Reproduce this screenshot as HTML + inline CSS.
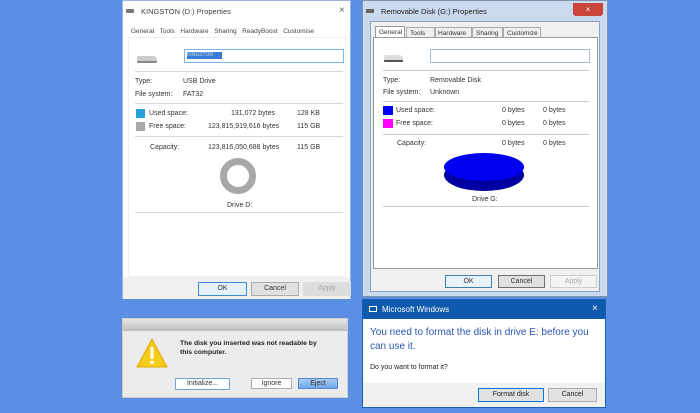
<!DOCTYPE html>
<html><head><meta charset="utf-8"><style>
*{margin:0;padding:0;box-sizing:border-box}
body{width:700px;height:413px;background:#5b8fe3;position:relative;overflow:hidden;font-family:"Liberation Sans",sans-serif;font-size:7px;color:#333}
.a{position:absolute}
.btn{position:absolute;border:1px solid #adadad;background:#e1e1e1;text-align:center;font-size:7px;line-height:12px;color:#333}
.hr{position:absolute;height:1px;background:#d8d8d8}
</style></head><body>

<!-- Window 1 -->
<div class="a" style="left:122px;top:0;width:229px;height:299px;background:#fff;border:1px solid #9bb6de">
  <div class="a" style="left:3px;top:8px;width:8px;height:4px;background:#777;border-radius:1px"></div>
  <div class="a" style="left:18px;top:6px;font-size:7.5px;color:#444">KINGSTON (D:) Properties</div>
  <div class="a" style="left:216px;top:4px;font-size:10px;color:#666">×</div>
  <div class="a" style="left:8px;top:27px;font-size:6.5px;color:#444;white-space:nowrap;word-spacing:1px">General&nbsp; Tools&nbsp; Hardware&nbsp; Sharing&nbsp; ReadyBoost&nbsp; Customise</div>
  <div class="a" style="left:5px;top:36px;width:218px;height:240px;border:1px solid #f0f0f0"></div>
  <div class="a" style="left:14px;top:55px;width:20px;height:7px;background:#ccc;border-radius:2px 4px 1px 1px;border-bottom:2px solid #888"></div>
  <div class="a" style="left:61px;top:48px;width:160px;height:14px;border:1px solid #7eb4ea"></div>
  <div class="a" style="left:64px;top:51px;width:35px;height:7px;background:#3a7bd5;color:#cde;font-size:5px;line-height:7px">KINGSTON</div>
  <div class="hr" style="left:12px;top:70px;width:208px"></div>
  <div class="a" style="left:12px;top:77px">Type:</div><div class="a" style="left:60px;top:77px">USB Drive</div>
  <div class="a" style="left:12px;top:90px">File system:</div><div class="a" style="left:60px;top:90px">FAT32</div>
  <div class="hr" style="left:12px;top:102px;width:208px"></div>
  <div class="a" style="left:13px;top:108px;width:9px;height:9px;background:#26a0da"></div>
  <div class="a" style="left:26px;top:109px">Used space:</div><div class="a" style="left:108px;top:109px">131,072 bytes</div><div class="a" style="left:174px;top:109px">128 KB</div>
  <div class="a" style="left:13px;top:121px;width:9px;height:9px;background:#aaa"></div>
  <div class="a" style="left:26px;top:122px">Free space:</div><div class="a" style="left:85px;top:122px">123,815,919,616 bytes</div><div class="a" style="left:174px;top:122px">115 GB</div>
  <div class="hr" style="left:12px;top:135px;width:208px"></div>
  <div class="a" style="left:27px;top:143px">Capacity:</div><div class="a" style="left:85px;top:143px">123,816,050,688 bytes</div><div class="a" style="left:174px;top:143px">115 GB</div>
  <div class="a" style="left:97px;top:157px;width:36px;height:36px;border-radius:50%;border:7px solid #a8a8a8"></div>
  <div class="a" style="left:104px;top:201px">Drive D:</div>
  <div class="hr" style="left:12px;top:211px;width:208px"></div>
  <div class="a" style="left:0;top:276px;width:227px;height:22px;background:#f0f0f0"></div>
  <div class="btn" style="left:75px;top:281px;width:49px;height:14px;border:1px solid #3c8ad8;background:#e5f1fb">OK</div>
  <div class="btn" style="left:128px;top:281px;width:48px;height:14px">Cancel</div>
  <div class="btn" style="left:180px;top:281px;width:48px;height:14px;color:#aaa;background:#ddd;border-color:#ddd">Apply</div>
</div>

<!-- Window 2 -->
<div class="a" style="left:362px;top:0;width:246px;height:297px;background:#c9d9ee;border:1px solid #7e93b3">
  <div class="a" style="left:3px;top:8px;width:8px;height:4px;background:#666"></div>
  <div class="a" style="left:18px;top:6px;font-size:7.5px;color:#222">Removable Disk (G:) Properties</div>
  <div class="a" style="left:210px;top:2px;width:30px;height:13px;background:#c8453a;border-radius:0 0 3px 3px;color:#fff;text-align:center;font-size:8px;line-height:13px">×</div>
  <div class="a" style="left:7px;top:20px;width:230px;height:271px;background:#f0f0f0;border:1px solid #8ea3c0"></div>
  <div class="a" style="left:12px;top:25px;width:30px;height:12px;background:#fff;border:1px solid #999;border-bottom:none;font-size:6.5px;padding:2px 3px">General</div>
  <div class="a" style="left:43px;top:26px;width:30px;height:11px;border:1px solid #aaa;font-size:6.5px;padding:2px 3px">Tools</div>
  <div class="a" style="left:71px;top:26px;width:38px;height:11px;border:1px solid #aaa;font-size:6.5px;padding:2px 3px">Hardware</div>
  <div class="a" style="left:109px;top:26px;width:31px;height:11px;border:1px solid #aaa;font-size:6.5px;padding:2px 3px">Sharing</div>
  <div class="a" style="left:140px;top:26px;width:38px;height:11px;border:1px solid #aaa;font-size:6.5px;padding:2px 3px">Customize</div>
  <div class="a" style="left:10px;top:36px;width:225px;height:232px;background:#fff;border:1px solid #999"></div>
  <div class="a" style="left:21px;top:54px;width:19px;height:7px;background:#ddd;border-radius:2px 4px 1px 1px;border-bottom:2px solid #555"></div>
  <div class="a" style="left:67px;top:48px;width:160px;height:14px;border:1px solid #abc"></div>
  <div class="hr" style="left:20px;top:69px;width:206px;background:#ccc"></div>
  <div class="a" style="left:20px;top:76px">Type:</div><div class="a" style="left:67px;top:76px">Removable Disk</div>
  <div class="a" style="left:20px;top:88px">File system:</div><div class="a" style="left:67px;top:88px">Unknown</div>
  <div class="hr" style="left:20px;top:100px;width:206px;background:#ccc"></div>
  <div class="a" style="left:20px;top:105px;width:10px;height:9px;background:#00f"></div>
  <div class="a" style="left:33px;top:106px">Used space:</div><div class="a" style="left:139px;top:106px">0 bytes</div><div class="a" style="left:180px;top:106px">0 bytes</div>
  <div class="a" style="left:20px;top:118px;width:10px;height:9px;background:#f0f"></div>
  <div class="a" style="left:33px;top:119px">Free space:</div><div class="a" style="left:139px;top:119px">0 bytes</div><div class="a" style="left:180px;top:119px">0 bytes</div>
  <div class="hr" style="left:20px;top:133px;width:206px;background:#ccc"></div>
  <div class="a" style="left:34px;top:139px">Capacity:</div><div class="a" style="left:139px;top:139px">0 bytes</div><div class="a" style="left:180px;top:139px">0 bytes</div>
  <div class="a" style="left:81px;top:158px;width:80px;height:32px;border-radius:50%;background:#0000a0"></div>
  <div class="a" style="left:81px;top:152px;width:80px;height:28px;border-radius:50%;background:#0000f0"></div>
  <div class="a" style="left:109px;top:195px">Drive G:</div>
  <div class="hr" style="left:20px;top:205px;width:206px;background:#ccc"></div>
  <div class="btn" style="left:82px;top:274px;width:47px;height:13px;border-color:#3c7fb1;background:#e8f2fa">OK</div>
  <div class="btn" style="left:135px;top:274px;width:47px;height:13px;border-color:#707070">Cancel</div>
  <div class="btn" style="left:187px;top:274px;width:47px;height:13px;color:#aaa;background:#f4f4f4;border-color:#ccc">Apply</div>
</div>

<!-- Mac dialog -->
<div class="a" style="left:122px;top:318px;width:226px;height:80px;background:#ececec;border:1px solid #ccc">
  <div class="a" style="left:0;top:0;width:224px;height:12px;background:linear-gradient(#e8e8e8,#bdbdbd)"></div>
  <svg class="a" style="left:13px;top:19px" width="32" height="30" viewBox="0 0 32 30"><path d="M16 1 L31 29 L1 29 Z" fill="#f5cc1a" stroke="#e0a800" stroke-linejoin="round"/><rect x="14.5" y="9" width="3" height="12" fill="#fff"/><rect x="14.5" y="23" width="3" height="3" fill="#fff"/></svg>
  <div class="a" style="left:57px;top:20px;font-size:6.8px;font-weight:bold;color:#222;line-height:9px;width:150px">The disk you inserted was not readable by this computer.</div>
  <div class="btn" style="left:52px;top:59px;width:55px;height:12px;line-height:10px;background:#fff;border-color:#6fa0d8">Initialize...</div>
  <div class="btn" style="left:128px;top:59px;width:41px;height:11px;line-height:9px;background:#fff">Ignore</div>
  <div class="btn" style="left:175px;top:59px;width:40px;height:11px;line-height:9px;background:linear-gradient(#a8ccf4,#6fa6ea);border-color:#5a8ad0">Eject</div>
</div>

<!-- Win10 dialog -->
<div class="a" style="left:362px;top:299px;width:244px;height:109px;background:#fff;border:1px solid #1a5fb0">
  <div class="a" style="left:0;top:0;width:242px;height:19px;background:#0f5aad"></div>
  <div class="a" style="left:6px;top:6px;width:8px;height:6px;border:1px solid #fff"></div>
  <div class="a" style="left:19px;top:5px;color:#fff;font-size:8px">Microsoft Windows</div>
  <div class="a" style="left:229px;top:3px;color:#fff;font-size:10px">×</div>
  <div class="a" style="left:7px;top:26px;color:#2b55b0;font-size:10px;line-height:14px;width:232px">You need to format the disk in drive E: before you can use it.</div>
  <div class="a" style="left:7px;top:64px;font-size:7px;color:#222">Do you want to format it?</div>
  <div class="a" style="left:0;top:83px;width:242px;height:24px;background:#f0f0f0"></div>
  <div class="btn" style="left:115px;top:88px;width:66px;height:14px;border:1px solid #0078d7;color:#222">Format disk</div>
  <div class="btn" style="left:185px;top:88px;width:49px;height:14px;color:#222">Cancel</div>
</div>
</body></html>
